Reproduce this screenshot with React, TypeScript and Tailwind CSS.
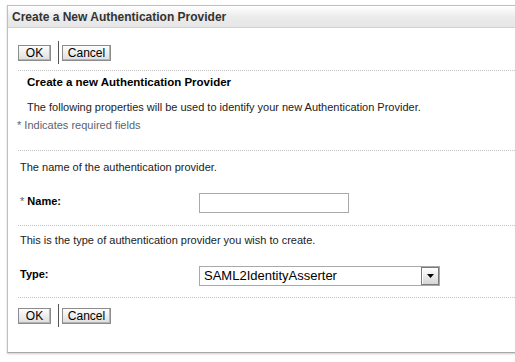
import React from "react";

const font = { fontFamily: "'Liberation Sans', Arial, sans-serif" };

function Btn({ children }: { children: React.ReactNode }) {
  return (
    <button className="h-[16px] border border-[#8c8c8c] bg-gradient-to-b from-[#fdfdfd] to-[#dedede] text-[12px] leading-[14px] text-black shadow-[inset_-1px_-1px_0_#b4b4b4]">
      {children}
    </button>
  );
}

function ButtonBar() {
  return (
    <div className="flex items-center pl-[10px] h-[23px]">
      <Btn>
        <span className="block w-[31px] text-center">OK</span>
      </Btn>
      <div className="ml-[7px] mr-[3px] w-px h-[23px] bg-[#555]" />
      <Btn>
        <span className="block w-[47px] text-center">Cancel</span>
      </Btn>
    </div>
  );
}

function Dotted() {
  return (
    <div className="ml-[10px] h-px bg-[linear-gradient(to_right,#c4c4c4_50%,transparent_50%)] bg-[length:2px_1px]" />
  );
}

export default function App() {
  return (
    <div className="w-[515px] h-[362px] overflow-hidden bg-white pt-[5px] pl-[7px]" style={font}>
      <div className="w-[520px] h-[348px] border-l border-t border-b border-[#c0c0c0] border-b-[#a8a8a8] shadow-[0_1px_2px_rgba(0,0,0,0.2)] text-[11px] text-[#222]">
        <div className="h-[22px] bg-gradient-to-b from-white via-[#ececec] to-[#e6e6e6] border-b border-[#d2d2d2] pl-[4px] flex items-center text-[12px] font-bold text-[#333]">
          Create a New Authentication Provider
        </div>

        <div className="pt-[13px] pb-[6px]">
          <ButtonBar />
        </div>
        <Dotted />

        <div className="h-[24px] pl-[19px] flex items-center text-[11.5px] font-bold text-black">
          Create a new Authentication Provider
        </div>
        <div className="h-[24px] pl-[19px] flex items-center">
          The following properties will be used to identify your new Authentication Provider.
        </div>
        <div className="h-[13px] pl-[9px] flex items-center text-[#5a6470]">
          * Indicates required fields
        </div>
        <div className="h-[18px]" />
        <Dotted />

        <div className="h-[33px] pl-[12px] flex items-center">The name of the authentication provider.</div>
        <div className="flex items-center pl-[12px] pt-[9px] pb-[11px]">
          <div className="w-[179px] pb-[4px] font-bold text-black">
            <span className="font-normal text-[#5a6470]">*</span> Name:
          </div>
          <input className="w-[150px] h-[20px] border border-[#a9a9a9] bg-white outline-none" />
        </div>
        <Dotted />

        <div className="h-[29px] pl-[12px] flex items-center">
          This is the type of authentication provider you wish to create.
        </div>
        <div className="flex items-center pl-[12px] pt-[11px] pb-[11px]">
          <div className="w-[179px] pb-[4px] font-bold text-black">Type:</div>
          <div className="w-[241px] h-[20px] border border-[#a9a9a9] bg-white flex items-center justify-between">
            <span className="pl-[4px] text-[13px] text-black leading-none">SAML2IdentityAsserter</span>
            <span className="w-[18px] h-[18px] border border-[#7a7a7a] bg-gradient-to-b from-white to-[#d6d6d6] shadow-[inset_1px_1px_0_#fff] flex items-center justify-center">
              <svg width="7" height="4" viewBox="0 0 7 4">
                <path d="M0 0H7L3.5 4Z" fill="#000" />
              </svg>
            </span>
          </div>
        </div>
        <Dotted />

        <div className="pt-[6px]">
          <ButtonBar />
        </div>
      </div>
    </div>
  );
}
